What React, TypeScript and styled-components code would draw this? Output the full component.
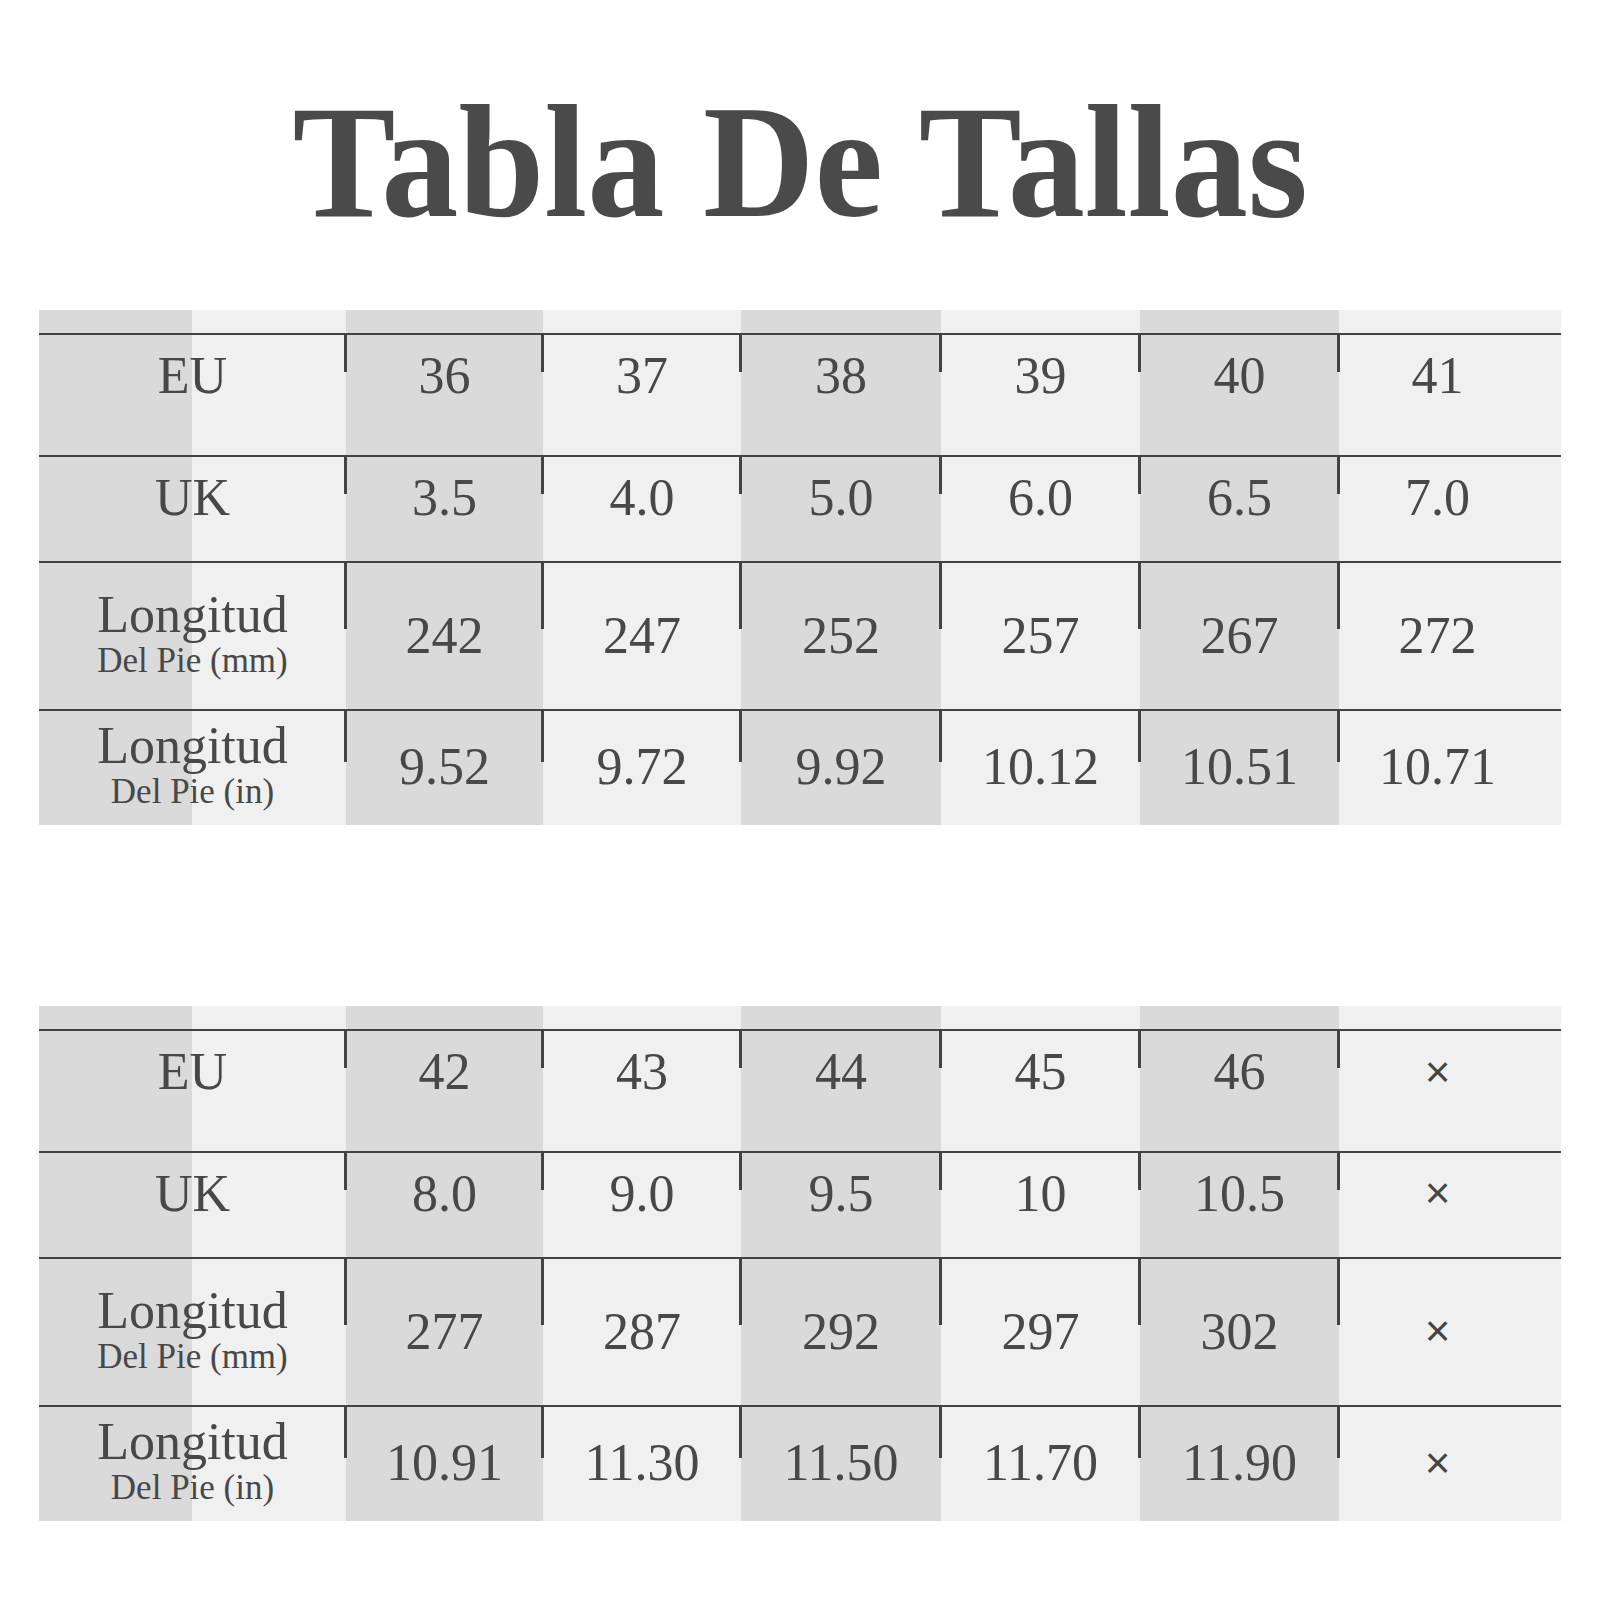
import React from "react";
import styled, {createGlobalStyle, css} from "styled-components";

const GlobalStyle = createGlobalStyle`
  html, body {
    margin: 0;
    padding: 0;
    background: #ffffff;
  }
  body {
    font-family: "Liberation Serif", "Times New Roman", serif;
  }
`;

const DARK = "#dadada";
const LIGHT = "#f0f0f0";
const INK = "#484848";
const LINE = "#434343";

type Shade = "dark" | "light" | "split";

const sizeTables = [
  {
    eu: ["36", "37", "38", "39", "40", "41"],
    uk: ["3.5", "4.0", "5.0", "6.0", "6.5", "7.0"],
    mm: ["242", "247", "252", "257", "267", "272"],
    inch: ["9.52", "9.72", "9.92", "10.12", "10.51", "10.71"],
  },
  {
    eu: ["42", "43", "44", "45", "46", "×"],
    uk: ["8.0", "9.0", "9.5", "10", "10.5", "×"],
    mm: ["277", "287", "292", "297", "302", "×"],
    inch: ["10.91", "11.30", "11.50", "11.70", "11.90", "×"],
  },
];

type RowKey = "eu" | "uk" | "mm" | "inch";

const rows: {
  key: RowKey;
  label: string;
  sub?: string;
  height: number;
  pad: number;
  tick: number;
}[] = [
  {key: "eu", label: "EU", height: 122, pad: 39, tick: 39},
  {key: "uk", label: "UK", height: 106, pad: 24, tick: 39},
  {key: "mm", label: "Longitud", sub: "Del Pie (mm)", height: 148, pad: 2, tick: 68},
  {key: "inch", label: "Longitud", sub: "Del Pie (in)", height: 116, pad: 3, tick: 53},
];

const shadeFor = (i: number): Shade => (i % 2 === 0 ? "dark" : "light");

function SizeTable({data}: {data: Record<RowKey, string[]>}) {
  const last = data.eu.length - 1;
  return (
    <Table>
      <BandCell $shade="split" />
      {data.eu.map((_, i) => (
        <BandCell key={i} $shade={shadeFor(i)} />
      ))}
      {rows.map((row) => (
        <React.Fragment key={row.key}>
          <Cell $shade="split" $height={row.height} $pad={row.pad}>
            {row.sub ? (
              <Label>
                <LabelMain>{row.label}</LabelMain>
                <LabelSub>{row.sub}</LabelSub>
              </Label>
            ) : (
              row.label
            )}
          </Cell>
          {data[row.key].map((value, i) => (
            <Cell
              key={i}
              $shade={shadeFor(i)}
              $height={row.height}
              $pad={row.pad}
              $tick={row.tick}
              $last={i === last}
            >
              {value === "×" ? <Cross>×</Cross> : value}
            </Cell>
          ))}
        </React.Fragment>
      ))}
    </Table>
  );
}

export default function App() {
  return (
    <Page>
      <GlobalStyle />
      <TitleRow>
        <Title>Tabla De Tallas</Title>
      </TitleRow>
      <Tables>
        {sizeTables.map((t, i) => (
          <SizeTable key={i} data={t} />
        ))}
      </Tables>
    </Page>
  );
}

const Page = styled.div`
  width: 1600px;
  height: 1600px;
  box-sizing: border-box;
  padding-top: 80px;
  background: #ffffff;
  overflow: hidden;
`;

const TitleRow = styled.div`
  display: flex;
  justify-content: center;
  height: 162px;
`;

const Title = styled.h1`
  margin: 0;
  font-family: "Liberation Serif", "Times New Roman", serif;
  font-weight: 700;
  font-size: 160px;
  line-height: 1;
  color: #4a4a4a;
  white-space: nowrap;
  transform: translateY(2px) scaleX(0.965);
`;

const Tables = styled.div`
  display: flex;
  flex-direction: column;
  gap: 181px;
  margin-top: 68px;
  padding-left: 39px;
`;

const Table = styled.div`
  display: grid;
  grid-template-columns: 307px 197px 198px 200px 199px 199px 222px;
  width: 1522px;
`;

const shadeStyles = {
  dark: css`
    background: ${DARK};
  `,
  light: css`
    background: ${LIGHT};
  `,
  split: css`
    background: linear-gradient(to right, ${DARK} 153px, ${LIGHT} 153px);
  `,
};

const BandCell = styled.div<{$shade: Shade}>`
  height: 23px;
  ${(p) => shadeStyles[p.$shade]}
`;

const Cell = styled.div<{
  $shade: Shade;
  $height: number;
  $pad: number;
  $tick?: number;
  $last?: boolean;
}>`
  position: relative;
  box-sizing: border-box;
  height: ${(p) => p.$height}px;
  padding-bottom: ${(p) => p.$pad}px;
  padding-right: ${(p) => (p.$last ? 25 : 0)}px;
  border-top: 2px solid ${LINE};
  display: flex;
  align-items: center;
  justify-content: center;
  font-family: "Liberation Serif", "Times New Roman", serif;
  font-size: 52px;
  color: ${INK};
  white-space: nowrap;
  ${(p) => shadeStyles[p.$shade]}

  &::before {
    content: "";
    display: ${(p) => (p.$tick ? "block" : "none")};
    position: absolute;
    left: -2px;
    top: -2px;
    width: 3px;
    height: ${(p) => p.$tick ?? 0}px;
    background: ${LINE};
  }
`;

const Label = styled.div`
  display: flex;
  flex-direction: column;
  align-items: center;
`;

const LabelMain = styled.span`
  font-size: 52px;
  line-height: 50px;
`;

const LabelSub = styled.span`
  font-size: 35px;
  line-height: 41px;
`;

const Cross = styled.span`
  font-family: "Liberation Sans", Arial, sans-serif;
  font-size: 44px;
  color: #454545;
`;
